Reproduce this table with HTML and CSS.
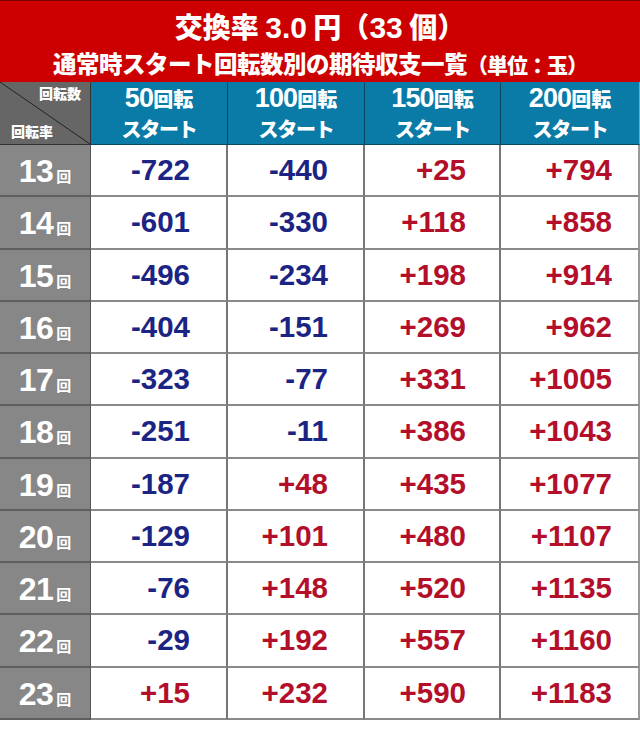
FILE: index.html
```html
<!DOCTYPE html>
<html lang="ja">
<head>
<meta charset="utf-8">
<link rel="stylesheet" href="styles.css">
</head>
<body>
<div class="page">
  <header class="title">
    <div class="t1">交換率 <span class="num">3.0</span> 円（<span class="num">33</span> 個）</div>
    <div class="t2">通常時スタート回転数別の期待収支一覧<span class="unit">（単位：玉）</span></div>
  </header>
  <div class="grid">
    <div class="corner">
      <svg class="diag" viewBox="0 0 91 63" preserveAspectRatio="none"><line x1="0" y1="0" x2="91" y2="63" stroke="#222" stroke-width="1"/></svg>
      <span class="c-top">回転数</span>
      <span class="c-bot">回転率</span>
    </div>
    <div class="head"><div class="h1"><span class="hn">50</span>回転</div><div class="st">スタート</div></div>
    <div class="head"><div class="h1"><span class="hn">100</span>回転</div><div class="st">スタート</div></div>
    <div class="head"><div class="h1"><span class="hn">150</span>回転</div><div class="st">スタート</div></div>
    <div class="head last"><div class="h1"><span class="hn">200</span>回転</div><div class="st">スタート</div></div>
  </div>
  <div class="grid body" id="rows"></div>
</div>
<script src="app.js"></script>
</body>
</html>
```

FILE: app.js
```js
const data = [
  [13, -722, -440, 25, 794],
  [14, -601, -330, 118, 858],
  [15, -496, -234, 198, 914],
  [16, -404, -151, 269, 962],
  [17, -323, -77, 331, 1005],
  [18, -251, -11, 386, 1043],
  [19, -187, 48, 435, 1077],
  [20, -129, 101, 480, 1107],
  [21, -76, 148, 520, 1135],
  [22, -29, 192, 557, 1160],
  [23, 15, 232, 590, 1183]
];
const rows = document.getElementById('rows');
let html = '';
for (const r of data) {
  html += '<div class="label"><span class="ln">' + r[0] + '</span><span class="lk">回</span></div>';
  for (let i = 1; i < 5; i++) {
    const v = r[i];
    const cls = v < 0 ? 'neg' : 'pos';
    const txt = v < 0 ? String(v) : '+' + v;
    html += '<div class="val c' + i + ' ' + cls + '">' + txt + '</div>';
  }
}
rows.innerHTML = html;
```

FILE: styles.css
```css
* { box-sizing: border-box; }
html, body { margin: 0; padding: 0; background: #fff; }
body {
  font-family: "Liberation Sans", "Noto Sans CJK JP", sans-serif;
  width: 640px;
}
.page { width: 640px; }

.title {
  background: #cc0000;
  border-top: 1px solid #7a0000;
  height: 82px;
  color: #fff;
  text-align: center;
  font-family: "Noto Sans CJK JP", sans-serif;
  font-weight: 900;
  display: flex;
  flex-direction: column;
  align-items: center;
  padding-top: 5px;
}
.t1 {
  font-size: 28px;
  line-height: 41px;
  height: 40px;
}
.t1 .num {
  font-family: "Liberation Sans", sans-serif;
  font-weight: 700;
  font-size: 30px;
}
.t2 {
  font-size: 23.5px;
  line-height: 34px;
  letter-spacing: -0.5px;
}
.t2 .unit { font-size: 21px; letter-spacing: -1px; }

.grid {
  display: grid;
  grid-template-columns: 91px 137px 137px 136px 139px;
}
.corner {
  position: relative;
  height: 63px;
  background: #666;
  border-right: 1px solid #333;
  border-bottom: 1px solid #333;
  color: #fff;
  font-family: "Noto Sans CJK JP", sans-serif;
  font-weight: 900;
  font-size: 14px;
  line-height: 20px;
}
.diag { position: absolute; left: 0; top: 0; width: 100%; height: 100%; }
.c-top { position: absolute; right: 9px; top: 1px; }
.c-bot { position: absolute; left: 11px; bottom: 3px; }

.head {
  height: 63px;
  background: #0a7aa6;
  border-right: 1px solid #0b4560;
  border-bottom: 1px solid #0b4560;
  color: #fff;
  font-family: "Noto Sans CJK JP", sans-serif;
  font-weight: 900;
  text-align: center;
  display: flex;
  flex-direction: column;
  justify-content: center;
  align-items: center;
  padding-bottom: 1px;
}
.head.last { border-right: 1px solid #999; }
.h1 { font-size: 20px; line-height: 31px; height: 31px; }
.hn {
  font-family: "Liberation Sans", sans-serif;
  font-weight: 700;
  font-size: 27px;
  letter-spacing: -0.8px;
}
.st { font-size: 20px; letter-spacing: -1.3px; line-height: 29px; height: 29px; }

.body { grid-auto-rows: 52.27px; }
.label {
  background: #878787;
  border-right: 1px solid #555;
  border-bottom: 2px solid #5e5e5e;
  color: #fff;
  display: flex;
  align-items: baseline;
  justify-content: center;
  padding-top: 8px;
  font-weight: 700;
}
.ln { font-size: 32px; letter-spacing: -0.5px; }
.lk {
  font-family: "Noto Sans CJK JP", sans-serif;
  font-size: 15px;
  margin-left: 3px;
}
.val {
  border-right: 2px solid #777;
  border-bottom: 2px solid #8a8a8a;
  font-weight: 700;
  font-size: 29.5px;
  text-align: right;
  padding-top: 10px;
  line-height: 30px;
}
.val.c1 { padding-right: 36px; }
.val.c2 { padding-right: 35px; }
.val.c3 { padding-right: 33px; }
.val.c4 { padding-right: 26px; border-right: 2px solid #999; }
.neg { color: #1c2483; }
.pos { color: #b30f2a; }
```
